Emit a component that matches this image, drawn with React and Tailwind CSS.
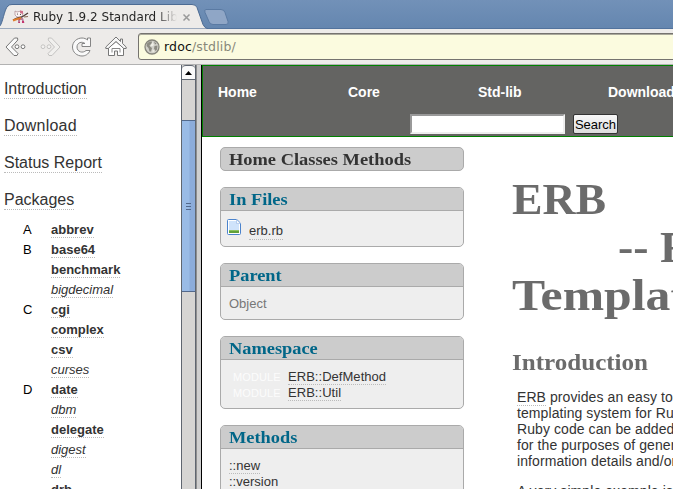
import React from "react";

const sections = ["Introduction", "Download", "Status Report", "Packages"];

const packages = [
  ["A", "abbrev", true],
  ["B", "base64", true],
  ["", "benchmark", true],
  ["", "bigdecimal", false],
  ["C", "cgi", true],
  ["", "complex", true],
  ["", "csv", true],
  ["", "curses", false],
  ["D", "date", true],
  ["", "dbm", false],
  ["", "delegate", true],
  ["", "digest", false],
  ["", "dl", false],
  ["", "drb", true],
];

const serif = "font-['Liberation_Serif',serif] font-bold";
const dotted = "border-b border-dotted border-[#bbb]";

function Favicon() {
  return (
    <svg width="18" height="16" viewBox="0 0 18 16" className="shrink-0">
      <path d="M3 2l2 1 4-1 2 2-1 4-5 0-2-2z" fill="#fdf6f6" stroke="#a9868d" strokeWidth=".7" />
      <path d="M8 1.500l3 .5 0 3-3-1z" fill="#cf6f88" />
      <circle cx="5.500" cy="5" r=".6" fill="#333" />
      <circle cx="8.500" cy="5.300" r=".6" fill="#333" />
      <path d="M6 9h5l1.500 5H6z" fill="#b8809a" />
      <path d="M7 10h1v1H7zM10 12h2v2h-2zM6.500 13h2v1h-2z" fill="#c4356e" />
      <path d="M8 11h2v3H8z" fill="#f0e6ea" />
      <path d="M1 11l4-2 5-1 6-4" stroke="#4a3a35" strokeWidth="1.300" fill="none" />
      <path d="M1 11.500l4-1.500 4-1" stroke="#e07c2c" strokeWidth="2" fill="none" />
      <path d="M12 8l4-.5" stroke="#8a6a58" strokeWidth="1.200" />
    </svg>
  );
}

function Back({ faded }) {
  return (
    <svg width="22" height="20" viewBox="0 0 22 20" className={faded ? "opacity-35 -scale-x-100" : ""}>
      <path d="M9.500 1h3l.3 2L6.500 10l6.500 6.500-1 2H9L1 10z" fill="#fafafa" stroke="#777" strokeLinejoin="round" />
      <circle cx="12" cy="9.700" r="1.900" fill="#fff" stroke="#777" />
      <circle cx="18" cy="9.700" r="1.900" fill="#fff" stroke="#777" />
    </svg>
  );
}

function Reload() {
  return (
    <svg width="22" height="22" viewBox="0 0 22 22">
      <path d="M19.500 2v8.500h-8.500V7.500h3C11 5 6 6.500 6 11c0 5.200 6 6.500 9 3.500h4C17.500 18.500 14 20 11 20c-5 0-9.500-3.700-9.500-9S6 2 11 2c2.300 0 4 .8 5.500 2V2z" fill="#fafafa" stroke="#858585" strokeLinejoin="round" />
    </svg>
  );
}

function HomeIcon() {
  return (
    <svg width="22" height="22" viewBox="0 0 22 22">
      <path d="M3.500 12v7.500h6V15h3v4.500h6V12L11 5.500z" fill="#fff" stroke="#777" strokeLinejoin="round" />
      <path d="M7 16.500v-4h8v4" fill="none" stroke="#888" />
      <path d="M11 1L.8 11v1.500h2.400L11 5.500l7.800 7h2.400V11L17.500 7.500V3h-2v2.500z" fill="#f6f6f6" stroke="#777" strokeLinejoin="round" />
    </svg>
  );
}

function Globe() {
  return (
    <svg width="16" height="16" viewBox="0 0 16 16" className="shrink-0">
      <circle cx="8" cy="8" r="7" fill="#d2d1ca" stroke="#85847b" strokeWidth="1.300" />
      <path d="M3 4.500L5.500 2.500 8 2.500 7.500 5 5.500 6 6 7.500 8 9 7 12.500 5.500 12.500 4.500 9 2.500 7zM10 2.500l2.500 2-1.500 1zM10.500 7l3-.5L13 10.500 11.500 12 10 9.500z" fill="#8c8b82" />
      <path d="M8.500 3L10 6 8 7.500 6.500 6.500zM8.500 10l2 2-2 1.500z" fill="#eeeee6" />
    </svg>
  );
}

function FileIcon() {
  return (
    <svg width="15" height="16" viewBox="0 0 15 16" className="mt-px">
      <path d="M1.500.5h8.300l3.700 3.700v10.300a1 1 0 0 1-1 1h-11a1 1 0 0 1-1-1v-13a1 1 0 0 1 1-1z" fill="#fff" stroke="#4b83cc" />
      <path d="M2 2h7.500v3H12v6H2z" fill="#cfe3fb" />
      <path d="M9.500.5v4h4z" fill="#f3f8ff" stroke="#90b4e3" strokeWidth=".6" />
      <path d="M2 11h10v3H2z" fill="#62a13b" />
      <path d="M2 11h10v1H2z" fill="#8bc35d" />
    </svg>
  );
}

function BrowserChrome() {
  return (
    <header className="h-[65px] shrink-0 border-b border-[#b2b2b2] bg-[#edebe9] font-['DejaVu_Sans',sans-serif]">
      <div className="relative h-[29px] bg-gradient-to-b from-[#7291b8] to-[#6486af]">
        <svg width="673" height="29" viewBox="0 0 673 29" className="absolute inset-0">
          <path d="M0 27.500h1M206 28.500h467" stroke="#52739d" />
          <path d="M-1 29V27C3 24 4 9 8 6q1-1.500 4-1.500h180q4 0 5 3l6 17q1.500 3.500 5 4.500z" fill="#edebe9" stroke="#4c6b93" />
          <path d="M206 9.500h15q3 0 4 3l3 9q1 3-2 3h-13q-3 0-4-3l-4-9q-1-3 1-3z" fill="#8fa6c6" stroke="#5a7aa3" />
        </svg>
        <div className="relative flex h-full items-center pt-[5px] pl-[12px]">
          <Favicon />
          <span className="ml-[3px] w-[144px] overflow-hidden bg-gradient-to-r from-[#222] from-84% to-[#edebe9] bg-clip-text text-[12px] leading-[18px] tracking-[0.02px] whitespace-nowrap text-transparent">
            Ruby 1.9.2 Standard Library
          </span>
          <svg width="9" height="9" viewBox="0 0 9 9" className="ml-[5px]">
            <path d="M1.500 1.500l6 6m0-6l-6 6" stroke="#999" strokeWidth="1.500" />
          </svg>
        </div>
      </div>
      <div className="flex h-[35px] items-center">
        <div className="flex w-[138px] shrink-0 items-center pl-[5px]">
          <Back />
          <span className="ml-[12px]"><Back faded /></span>
          <span className="ml-[10px]"><Reload /></span>
          <span className="ml-[12px]"><HomeIcon /></span>
        </div>
        <div className="flex h-[27px] w-[540px] shrink-0 items-center rounded-[3px] border border-[#75736f] bg-[#fbfbdf] pl-[5px] shadow-[inset_0_1px_0_#aaa99c]">
          <Globe />
          <span className="ml-[4px] text-[12.5px] leading-4 tracking-[0.15px] text-[#888879]"><span className="text-[#111]">rdoc</span>/stdlib/</span>
        </div>
      </div>
    </header>
  );
}

function Sidebar() {
  return (
    <nav className="w-[181px] shrink-0 overflow-hidden bg-white pt-[15px] pl-1">
      {sections.map((s) => (
        <div key={s} className="h-[37px] text-[16px] leading-[18px] text-[#333]">
          <span className={`inline-block ${s === "Introduction" ? "tracking-[-0.08px]" : ""} ${s === "Download" ? "tracking-[0.2px]" : ""} ${dotted}`}>{s}</span>
        </div>
      ))}
      <div className="-mt-[6px] pl-[19px] text-[13px] leading-[14px]">
        {packages.map(([letter, name, bold]) => (
          <div key={name} className="flex h-5">
            <span className="w-7 pt-px text-black">{letter}</span>
            <span className={`h-4 pt-px text-[#333] ${dotted} ${bold ? "font-bold" : "italic"}`}>{name}</span>
          </div>
        ))}
      </div>
    </nav>
  );
}

function Scrollbar() {
  return (
    <div className="flex w-[21px] shrink-0 border-r border-black bg-[#cfcfcf]">
      <div className="flex w-[15px] flex-col border-x border-[#5f6670] bg-[#d6d5d3]">
        <div className="flex h-[15px] items-center justify-center rounded-t-sm border-t border-b border-[#5f6670] bg-[#fafafa]">
          <svg width="7" height="4" viewBox="0 0 7 4"><path d="M0 4L3.500 0 7 4z" /></svg>
        </div>
        <div className="mt-[40px] flex h-[172px] flex-col items-center justify-center gap-[2px] border-y border-[#52698c] bg-gradient-to-r from-[#99bbe6] from-55% to-[#8cacda] to-60%">
          <i className="h-px w-[5px] bg-[#52698c]" />
          <i className="h-px w-[5px] bg-[#52698c]" />
          <i className="h-px w-[5px] bg-[#52698c]" />
        </div>
      </div>
      <div className="w-px bg-[#8f8f8f]" />
    </div>
  );
}

function Panel({ title, height, children }) {
  return (
    <section className={`${height} w-[244px] shrink-0 overflow-hidden rounded-[5px] border border-[#aaa] bg-[#eee] text-[13px] text-[#333]`}>
      <h3 className={`${serif} h-[23px] border-b border-[#aaa] bg-[#ccc] pl-2 text-[17px] leading-[23px] text-[#006688]`}>
        <span className="inline-block origin-left scale-x-[1.08]">{title}</span>
      </h3>
      {children}
    </section>
  );
}

function Module({ name }) {
  return (
    <div className="flex h-4 items-start pl-[12px]">
      <span className="w-[55px] text-[11px] leading-[17px] tracking-[0.1px] text-[#fcfcfc]">MODULE</span>
      <span className={`leading-[15px] tracking-[0.04px] ${dotted}`}>{name}</span>
    </div>
  );
}

export default function App() {
  return (
    <div className="flex h-[489px] w-[673px] flex-col overflow-hidden bg-white font-['Liberation_Sans',Arial,sans-serif]">
      <BrowserChrome />
      <div className="flex min-h-0 flex-1">
        <Sidebar />
        <Scrollbar />
        <main className="min-w-0 flex-1 overflow-hidden">
          <div className="h-[72px] w-[600px] border border-[#008000] bg-[#646462] pl-[15px]">
            <div className="flex h-[48px] pt-[18px] text-[14px] leading-4 font-bold text-white">
              {["Home", "Core", "Std-lib", "Downloads"].map((n) => (
                <span key={n} className="w-[130px] shrink-0">{n}</span>
              ))}
            </div>
            <div className="flex pl-[192px]">
              <div className="h-5 w-[155px] border-2 border-t-[#999] border-r-[#eee] border-b-[#eee] border-l-[#999] bg-white" />
              <button className="ml-2 h-5 w-[45px] rounded-[2px] border border-[#333] bg-gradient-to-b from-[#f8f8f8] to-[#ddd] text-[13px] leading-[19px] text-black">
                Search
              </button>
            </div>
          </div>
          <div className="flex">
            <aside className="flex w-[310px] shrink-0 flex-col gap-4 pt-[10px] pl-[18px]">
              <div className={`${serif} h-6 w-[244px] rounded-[5px] border border-[#aaa] bg-[#ccc] pl-2 text-[17px] leading-[23px] text-[#333]`}>
                <span className="inline-block origin-left scale-x-[1.083]">Home Classes Methods</span>
              </div>
              <Panel title="In Files" height="h-[60px]">
                <div className="flex pt-[7px] pl-[6px]">
                  <FileIcon />
                  <span className={`mt-[5px] ml-[7px] leading-[16px] ${dotted}`}>erb.rb</span>
                </div>
              </Panel>
              <Panel title="Parent" height="h-[57px]">
                <div className="pt-[9px] pl-2 leading-4 text-[#777]">Object</div>
              </Panel>
              <Panel title="Namespace" height="h-[73px]">
                <div className="pt-[9px]">
                  <Module name="ERB::DefMethod" />
                  <Module name="ERB::Util" />
                </div>
              </Panel>
              <Panel title="Methods" height="h-[80px]">
                <div className="flex flex-col items-start pt-[9px] pl-2 leading-[15px]">
                  <span className={dotted}>::new</span>
                  <span className={dotted}>::version</span>
                </div>
              </Panel>
            </aside>
            <article className="w-[400px] shrink-0 text-[#333]">
              <h1 className={`${serif} pt-[39px] text-[44px] leading-[48px] whitespace-pre text-[#6b6b6b]`}>
                <div className="origin-left scale-x-[1.04]">ERB</div>
                <div className="pl-[106px]"><span className="inline-block origin-left scale-x-[1.04]">-- Ruby</span></div>
                <div className="origin-left scale-x-[1.13]">Templating</div>
              </h1>
              <h2 className={`${serif} mt-[29px] text-[23px] leading-[28px] text-[#6b6b6b]`}>
                <span className="inline-block origin-left scale-x-[1.09]">Introduction</span>
              </h2>
              <div className="mt-[12px] pl-[5px] text-[14px] leading-4 tracking-[0.08px] whitespace-nowrap">
                <div><span className={dotted}>ERB</span> provides an easy to use but powerful</div>
                <div>templating system for Ruby. Using ERB, actual</div>
                <div>Ruby code can be added to any plain text</div>
                <div>for the purposes of generating document</div>
                <div>information details and/or flow control.</div>
                <div className="mt-[14px]">A very simple example is this:</div>
              </div>
            </article>
          </div>
        </main>
      </div>
    </div>
  );
}
